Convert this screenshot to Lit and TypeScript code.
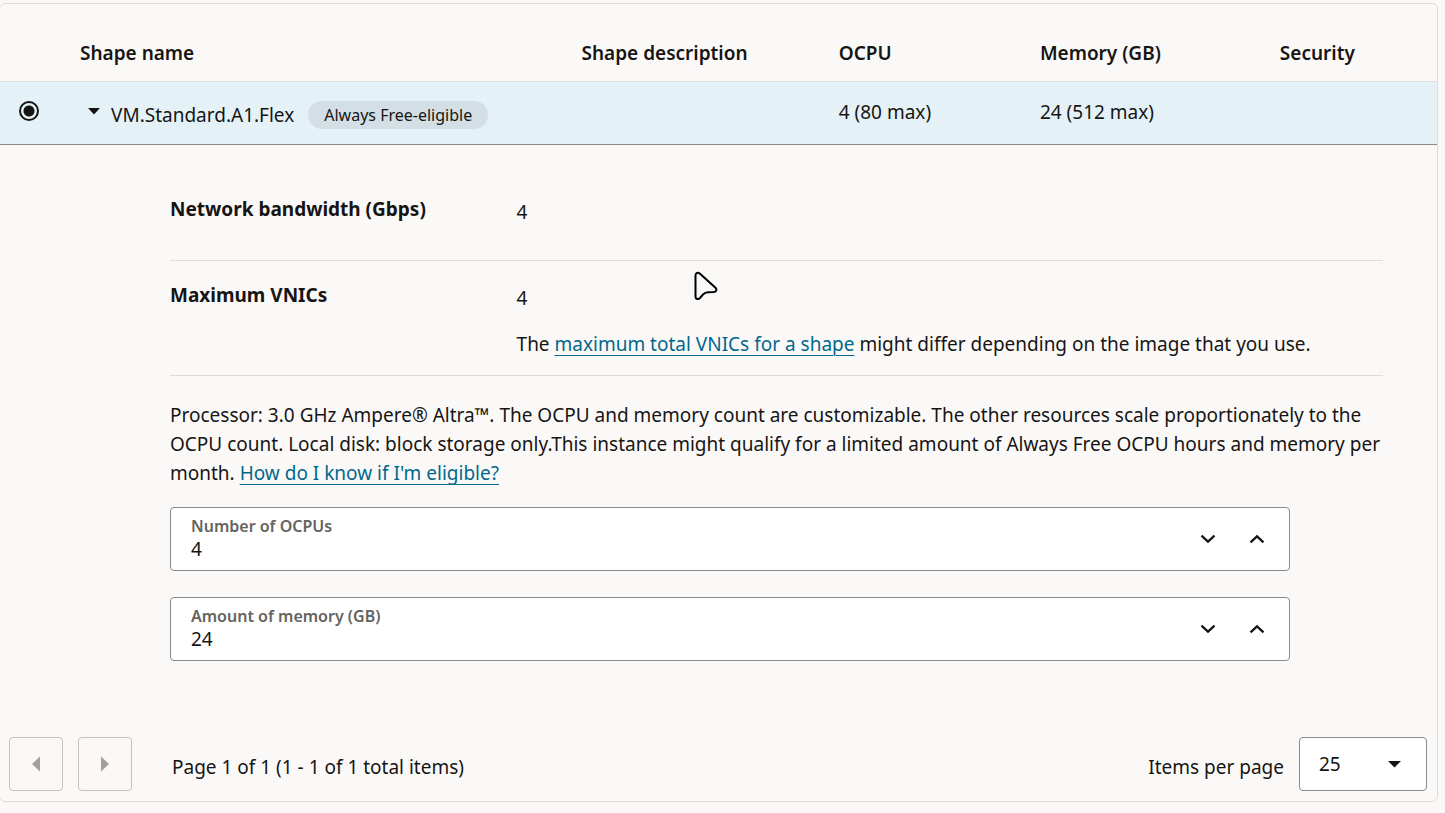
import { LitElement, html, css, svg } from "lit";
import { customElement, property, state } from "lit/decorators.js";

const chevron = (d: string) => html`<svg width="16" height="10" viewBox="0 0 16 10" aria-hidden="true">
  ${svg`<path d=${d} fill="none" stroke="currentColor" stroke-width="2.300"></path>`}
</svg>`;

@customElement("number-stepper")
export class NumberStepper extends LitElement {
  @property() label = "";
  @property({ type: Number }) value = 0;

  static styles = css`
    :host { display: block; }
    .field {
      display: flex;
      align-items: center;
      box-sizing: border-box;
      height: 64px;
      padding: 0 8px 0 20px;
      border: 1px solid #8b8a89;
      border-radius: 4px;
      background: #fff;
    }
    .text { flex: 1; display: flex; flex-direction: column; min-width: 0; padding-bottom: 2px; }
    .label { font-size: 16px; line-height: 22px; font-weight: 600; color: #65635f; }
    .input {
      width: 100%;
      height: 24px;
      padding: 0;
      border: 0;
      outline: 0;
      background: none;
      font: inherit;
      line-height: 24px;
      color: #161513;
    }
    .step {
      display: grid;
      place-items: center;
      width: 49px;
      height: 48px;
      padding: 0;
      border: 0;
      background: none;
      color: #161513;
    }
  `;

  render() {
    return html`<div class="field">
      <div class="text">
        <label class="label" for="value">${this.label}</label>
        <input class="input" id="value" type="text" inputmode="numeric" .value=${String(this.value)} />
      </div>
      <button class="step" type="button" aria-label="Decrease" @click=${() => this.value--}>${chevron("M1.5 1.700 8 7.600l6.500-5.900")}</button>
      <button class="step" type="button" aria-label="Increase" @click=${() => this.value++}>${chevron("M1.5 8.300 8 2.400l6.500 5.900")}</button>
    </div>`;
  }
}

@customElement("app-root")
export class AppRoot extends LitElement {
  @state() private open = true;

  static styles = css`
    :host {
      display: block;
      position: relative;
      box-sizing: border-box;
      min-height: 100vh;
      padding-top: 3px;
      overflow: hidden;
      background: #fbf9f8;
      color: #161513;
      font-family: "Noto Sans", "Open Sans", sans-serif;
      font-size: 19px;
      line-height: 28px;
    }
    .panel {
      margin: 0 7px 0 -1px;
      border: 1px solid #dfdddb;
      border-radius: 6px;
    }
    .shapes { width: 100%; border-collapse: separate; border-spacing: 0; table-layout: fixed; }
    .c-select { width: 64px; }
    .c-name { width: 34.9%; }
    .c-desc { width: 17.9%; }
    .c-ocpu { width: 14%; }
    .c-memory { width: 16.7%; }
    .head {
      height: 28px;
      padding: 35px 16px 14px;
      border-bottom: 1px solid #dfdddb;
      text-align: left;
      font-weight: 600;
      white-space: nowrap;
    }
    .cell {
      height: 28px;
      padding: 16px 16px 14px;
      border-bottom: 1px solid #8b8a89;
      background: #e4f1f7;
      vertical-align: top;
      white-space: nowrap;
    }
    .radio {
      appearance: none;
      display: block;
      width: 20px;
      height: 20px;
      margin: 3px;
      border: 2px solid #161513;
      border-radius: 50%;
      background: radial-gradient(circle, #161513 5px, transparent 6px);
    }
    .name { display: flex; align-items: center; padding-top: 2px; }
    .toggle {
      display: grid;
      place-items: center;
      width: 28px;
      height: 22px;
      margin-bottom: 8px;
      padding: 0;
      border: 0;
      background: none;
      color: inherit;
    }
    .shape { margin: 0 14px 0 3px; }
    .badge {
      padding: 0 16px;
      border-radius: 14px;
      background: #d4dfe5;
      font-size: 16px;
    }
    .detail { padding: 30px 54px 76px 170px; }
    .facts { margin: 0; }
    .fact {
      display: grid;
      grid-template-columns: 2fr 5fr;
      align-content: start;
      box-sizing: border-box;
      min-height: 86px;
      padding: 20px 0 17px;
      border-bottom: 1px solid #dfdddb;
    }
    .term { font-weight: 700; }
    .value { display: grid; gap: 18px; margin: 0; padding-top: 3px; }
    .note { margin: 25px 0 19px; line-height: 29px; }
    .link { color: #00688c; text-decoration: underline; text-decoration-thickness: 1px; text-underline-offset: 4px; }
    .fields { display: grid; gap: 26px; max-width: 1120px; }
    .footer { display: flex; align-items: center; padding: 0 10px 10px 9px; }
    .page {
      display: grid;
      place-items: center;
      width: 54px;
      height: 54px;
      margin-right: 15px;
      padding: 0;
      border: 1px solid #c5c3c1;
      border-radius: 4px;
      background: none;
      color: #a2a09e;
    }
    .summary { flex: 1; padding: 6px 0 0 25px; }
    .per-page { padding: 6px 15px 0 0; }
    .picker { display: grid; align-items: center; width: 128px; }
    .select {
      grid-area: 1 / 1;
      appearance: none;
      width: 100%;
      height: 54px;
      padding: 0 19px;
      border: 1px solid #8b8a89;
      border-radius: 4px;
      background: #fff;
      color: inherit;
      font: inherit;
    }
    .caret { grid-area: 1 / 1; justify-self: end; margin-right: 26px; pointer-events: none; }
    .pointer { position: absolute; left: 692px; top: 269px; pointer-events: none; }
  `;

  private detail() {
    return html`<tr>
      <td class="detail" colspan="6">
        <dl class="facts">
          <div class="fact">
            <dt class="term">Network bandwidth (Gbps)</dt>
            <dd class="value"><span>4</span></dd>
          </div>
          <div class="fact">
            <dt class="term">Maximum VNICs</dt>
            <dd class="value">
              <span>4</span>
              <span>The <a class="link" href="#vnics">maximum total VNICs for a shape</a> might differ depending on the image that you use.</span>
            </dd>
          </div>
        </dl>
        <p class="note">
          Processor: 3.0 GHz Ampere® Altra™. The OCPU and memory count are customizable. The other resources scale
          proportionately to the OCPU count. Local disk: block storage only.This instance might qualify for a limited
          amount of Always Free OCPU hours and memory per month.
          <a class="link" href="#eligible">How do I know if I'm eligible?</a>
        </p>
        <div class="fields">
          <number-stepper label="Number of OCPUs" .value=${4}></number-stepper>
          <number-stepper label="Amount of memory (GB)" .value=${24}></number-stepper>
        </div>
      </td>
    </tr>`;
  }

  render() {
    return html`
      <section class="panel">
        <table class="shapes">
          <colgroup>
            <col class="c-select" /><col class="c-name" /><col class="c-desc" /><col class="c-ocpu" /><col class="c-memory" /><col />
          </colgroup>
          <thead>
            <tr>
              <th class="head"></th>
              <th class="head">Shape name</th>
              <th class="head">Shape description</th>
              <th class="head">OCPU</th>
              <th class="head">Memory (GB)</th>
              <th class="head">Security</th>
            </tr>
          </thead>
          <tbody>
            <tr>
              <td class="cell"><input class="radio" type="radio" name="shape" checked aria-label="VM.Standard.A1.Flex" /></td>
              <td class="cell">
                <div class="name">
                  <button class="toggle" type="button" aria-label="Toggle details" aria-expanded=${this.open} @click=${() => (this.open = !this.open)}>
                    <svg width="12" height="7" viewBox="0 0 12 7" aria-hidden="true"><path d="M0 0h12L6 6.5z" fill="currentColor"></path></svg>
                  </button>
                  <span class="shape">VM.Standard.A1.Flex</span>
                  <span class="badge">Always Free-eligible</span>
                </div>
              </td>
              <td class="cell"></td>
              <td class="cell">4 (80 max)</td>
              <td class="cell">24 (512 max)</td>
              <td class="cell"></td>
            </tr>
            ${this.open ? this.detail() : null}
          </tbody>
        </table>
        <footer class="footer">
          <button class="page" type="button" disabled aria-label="Previous page">
            <svg width="10" height="16" viewBox="0 0 10 16" aria-hidden="true"><path d="M9 .5v15L1 8z" fill="currentColor"></path></svg>
          </button>
          <button class="page" type="button" disabled aria-label="Next page">
            <svg width="10" height="16" viewBox="0 0 10 16" aria-hidden="true"><path d="M1 .5v15L9 8z" fill="currentColor"></path></svg>
          </button>
          <span class="summary">Page 1 of 1 (1 - 1 of 1 total items)</span>
          <label class="per-page" for="per-page">Items per page</label>
          <span class="picker">
            <select class="select" id="per-page">
              <option>25</option>
              <option>50</option>
              <option>100</option>
            </select>
            <svg class="caret" width="13" height="7" viewBox="0 0 13 7" aria-hidden="true"><path d="M0 0h13L6.5 6.5z" fill="currentColor"></path></svg>
          </span>
        </footer>
      </section>
      <svg class="pointer" width="28" height="34" viewBox="0 0 28 34" aria-hidden="true">
        <path d="M3.5 6.5v21c0 2.500 2.500 3.500 4.500 1.500l3-3.500c1.500-1.500 3-2 5-2.200l6-.3c2.500-.3 3.200-2.600 1.500-4.200L8 4.700C6 3 3.500 3.800 3.500 6.500z" fill="#fbf9f8" stroke="#000" stroke-width="2" stroke-linejoin="round"></path>
      </svg>
    `;
  }
}
